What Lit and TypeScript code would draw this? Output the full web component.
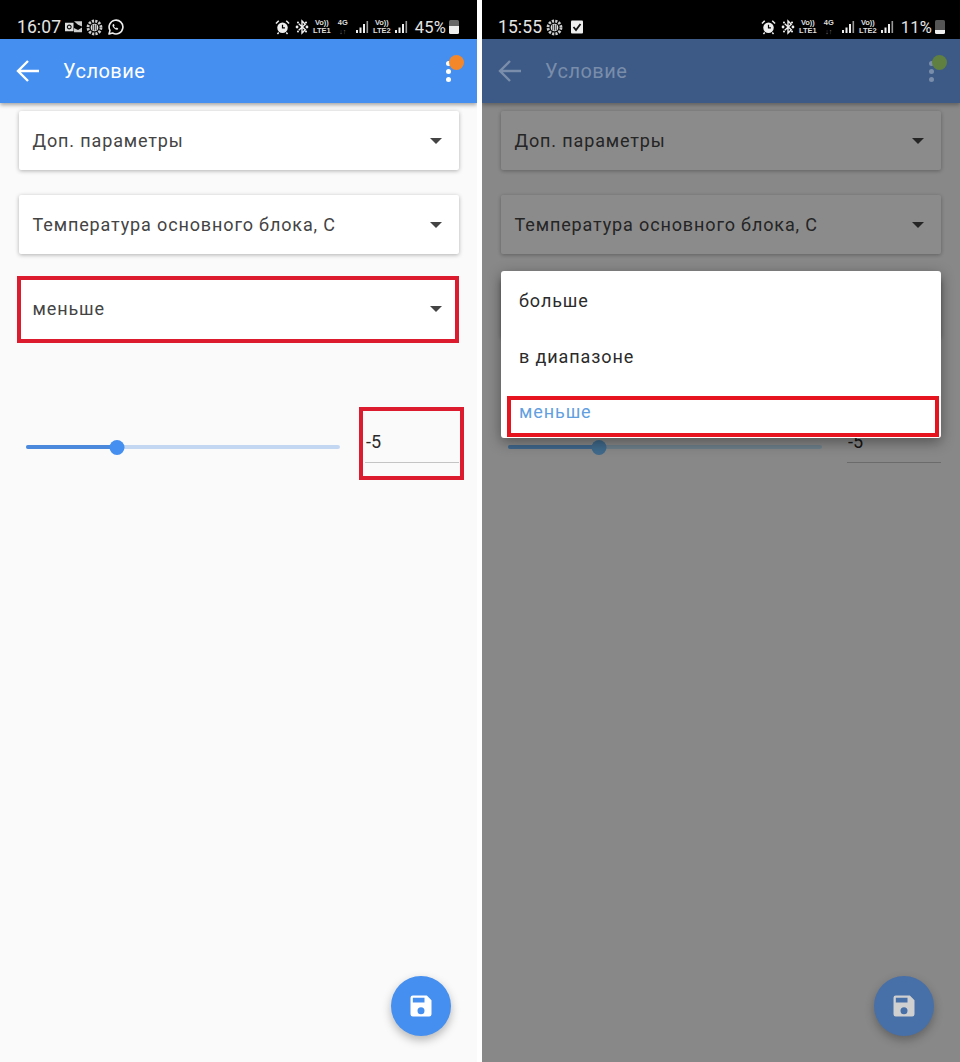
import { LitElement, html, css, svg, nothing } from "lit";
import { customElement, property } from "lit/decorators.js";

const caret = html`<svg class="caret" width="12" height="6" viewBox="0 0 12 6"><path d="M0 0h12L6 6z" fill="currentColor"/></svg>`;

const alarm = html`<svg width="15" height="16" viewBox="0 0 16 16"><circle cx="8" cy="8.800" r="5.600" fill="#eee"/><path d="M8 5.500v3.400h2.600" stroke="#000" stroke-width="1.300" fill="none"/><path d="M1 4.200 4 1.400M15 4.200l-3-2.800M4 13.800l-1.400 1.600M12 13.800l1.400 1.600" stroke="#eee" stroke-width="1.600"/></svg>`;
const bt = html`<svg width="14" height="16" viewBox="0 0 15 16"><path d="M4 4.500 11 11 7.500 14.500v-13L11 5 4 11.500" stroke="#eee" stroke-width="1.500" fill="none"/><circle cx="2.200" cy="8" r="1.500" fill="#eee"/><circle cx="12.800" cy="8" r="1.500" fill="#eee"/><circle cx="3.200" cy="3.200" r="1.100" fill="#eee"/><circle cx="11.800" cy="3.200" r="1.100" fill="#eee"/><circle cx="3.200" cy="12.800" r="1.100" fill="#eee"/><circle cx="11.800" cy="12.800" r="1.100" fill="#eee"/></svg>`;
const signal = html`<svg width="13" height="14" viewBox="0 0 13 14"><rect x="0" y="10" width="2" height="3" fill="#eee"/><rect x="3.500" y="7.500" width="2" height="5.500" fill="#eee"/><rect x="7" y="4" width="2" height="9" fill="#eee"/><rect x="10.500" y="1" width="1.600" height="12" fill="#999"/></svg>`;
const gear = html`<svg width="17" height="17" viewBox="0 0 17 17"><circle cx="8.500" cy="8.500" r="6.500" fill="none" stroke="#ccc" stroke-width="2.800" stroke-dasharray="2.200 1.200"/><circle cx="8.500" cy="8.500" r="3.800" fill="#ddd"/><path d="M6.700 5.500v6M8.500 5.500v6M10.300 5.500v6" stroke="#222" stroke-width=".8"/></svg>`;
const mail = html`<svg width="17" height="14" viewBox="0 0 18 14"><rect x="0" y="2.500" width="9" height="9" fill="#ddd"/><circle cx="4.500" cy="7" r="2" fill="none" stroke="#111" stroke-width="1.200"/><path d="M9.500 1H18v5.500l-4.200-2z" fill="#ccc"/><path d="M9.500 12.500H18V7.500l-4.200 2.600-4.300-2z" fill="#ccc"/></svg>`;
const whatsapp = html`<svg width="17" height="17" viewBox="0 0 17 17"><path d="M2 15l1-3.600a6.900 6.900 0 1 1 2.600 2.600z" fill="none" stroke="#eee" stroke-width="1.600" stroke-linejoin="round"/><path d="M6 5.200c-.9.8-.6 2.200.6 3.600s2.700 2.300 3.700 1.900c.7-.3 1-.9.900-1.300l-1.500-.8-.7.700c-.7-.2-1.600-1.100-2-2l.6-.7-.7-1.600z" fill="#eee"/></svg>`;
const checkbox = html`<svg width="12" height="14" viewBox="0 0 12 14"><rect width="12" height="13" y=".5" rx="1" fill="#eee"/><path d="M2.500 7l2.500 3 4.500-6" stroke="#111" stroke-width="1.800" fill="none"/></svg>`;
const save = svg`<path d="M17 3H5a2 2 0 0 0-2 2v14a2 2 0 0 0 2 2h14a2 2 0 0 0 2-2V7l-4-4zm-5 16a3 3 0 1 1 0-6 3 3 0 0 1 0 6zm3-10H5V5h10v4z" fill="#fff"/>`;

@customElement("phone-screen")
class PhoneScreen extends LitElement {
  @property() time = "";
  @property() battery = "";
  @property({ type: Boolean }) dim = false;

  static styles = css`
    :host { display: flex; flex-direction: column; position: relative; height: 1062px; background: #fafafa; overflow: hidden; font-family: Roboto, sans-serif; }
    .status { height: 39px; flex: none; background: #000; color: #e4e4e4; display: flex; align-items: flex-end; justify-content: space-between; padding: 0 18px 1px 17px; box-sizing: border-box; position: relative; z-index: 3; }
    .dim .status { padding-right: 15px; padding-left: 16px; }
    .group { display: flex; align-items: center; gap: 4px; height: 22px; }
    .time { font-size: 17.500px; letter-spacing: .1px; }
    .right { gap: 5px; }
    .net { width: 16px; display: flex; flex-direction: column; align-items: center; font: 700 7.500px/8.500px "Liberation Sans", sans-serif; color: #ddd; letter-spacing: -.1px; }
    .net small { font-size: 7px; color: #777; line-height: 7px; }
    .pct { font-size: 16.500px; letter-spacing: .2px; margin-left: 2px; }
    .batt { width: 10px; height: 14px; border-radius: 1.500px; background: linear-gradient(#666 0 42%, #eee 42%); flex: none; margin-left: -2px; }
    .dim .batt { background: linear-gradient(#555 0 72%, #eee 72%); }
    .bar { height: 64px; flex: none; background: #448ff0; box-shadow: 0 2px 4px rgba(0,0,0,.35); color: #fff; display: flex; align-items: center; position: relative; z-index: 2; padding: 0 18px 0 16px; }
    .title { font-size: 20px; margin-left: 23px; letter-spacing: .5px; flex: 1; }
    .dots { display: flex; flex-direction: column; gap: 3px; margin-right: 8px; }
    .dots i { width: 5px; height: 5px; border-radius: 50%; background: currentColor; }
    .badge { position: absolute; right: 13px; top: 16px; width: 15px; height: 15px; border-radius: 50%; background: #f5872b; }
    .dim .bar { background: #3c5a85; color: #7a8dab; box-shadow: 0 2px 4px rgba(0,0,0,.3); }
    .dim .badge { background: #5f8040; }
    .body { flex: 1; padding: 8px 0 0 19px; display: flex; flex-direction: column; gap: 25px; }
    .select { width: 440px; box-sizing: border-box; height: 59px; flex: none; background: #fff; border-radius: 2px; box-shadow: 0 1px 4px rgba(0,0,0,.3); display: flex; align-items: center; justify-content: space-between; padding: 0 17px 0 13.500px; font-size: 18px; letter-spacing: .87px; color: #444; position: relative; }
    .select.marked { box-shadow: 0 5px 0 #fff; }
    .caret { color: #444; }
    .mark { position: absolute; border: 4px solid #dc1c2e; box-sizing: border-box; pointer-events: none; }
    .mark-select { inset: -3px 0 -5px -2px; }
    .mark-input { inset: -17px -5px -18px -6px; }
    .slider-row { display: flex; align-items: center; width: 440px; box-sizing: border-box; height: 39px; margin-top: 61px; padding-left: 7px; gap: 25px; }
    .slider { position: relative; width: 314px; flex: none; height: 4px; margin-top: 7px; background: #c3d7f2; border-radius: 2px; }
    .slider .fill { height: 100%; border-radius: 2px; background: #4a89dc; }
    .slider .thumb { position: absolute; top: -5.500px; width: 15px; height: 15px; border-radius: 50%; background: #448ff0; transform: translateX(-50%); }
    .dim .slider { background: #c8e9ff; }
    .dim .slider .fill { background: #74bbff; }
    .dim .slider .thumb { background: #74c0ff; }
    .field { position: relative; flex: 1; height: 39px; border-bottom: 1px solid #c4c4c4; box-sizing: border-box; padding-left: 1px; font-size: 18px; line-height: 36px; color: #2a2a2a; }
    .fab { position: absolute; right: 26px; bottom: 26px; width: 60px; height: 60px; border-radius: 50%; background: #448ff0; box-shadow: 0 4px 10px rgba(0,0,0,.28); display: flex; align-items: center; justify-content: center; z-index: 2; }
    .dim .fab { background: #476fa8; }
    .dim .fab path { fill: #d0d0d0; }
    .scrim { position: absolute; inset: 39px 0 0; background: rgba(0,0,0,.455); z-index: 1; }
    .menu { position: absolute; left: 19px; top: 271px; width: 440px; height: 167px; background: #fff; border-radius: 3px; box-shadow: 0 4px 14px rgba(0,0,0,.4); z-index: 3; padding-left: 18px; box-sizing: border-box; font-size: 18px; letter-spacing: .9px; color: #2b2b2b; }
    .item { height: 56px; line-height: 60px; }
    .item.on { color: #629fdf; position: relative; margin-left: -18px; padding-left: 18px; margin-top: -1px; }
    .item.on .mark { inset: 14px 2px 1px 6px; border-color: #e5141f; }
  `;

  render() {
    const d = this.dim;
    return html`<div class=${d ? "dim" : ""} style="display:contents">
      <div class="status">
        <div class="group">
          <span class="time">${this.time}</span>
          ${d ? html`${gear}<span style="width:0"></span>${checkbox}` : html`${mail}${gear}${whatsapp}`}
        </div>
        <div class="group right">
          ${alarm}${bt}
          <span class="net">Vo))<span>LTE1</span></span>
          <span class="net">4G<small>↓↑</small></span>
          ${signal}
          <span class="net">Vo))<span>LTE2</span></span>
          ${signal}
          <span class="pct">${this.battery}</span>
          <span class="batt"></span>
        </div>
      </div>
      <div class="bar">
        <svg width="24" height="24" viewBox="0 0 24 24"><path d="M23 12H2M12 2 2 12l10 10" stroke="currentColor" stroke-width="2.400" fill="none"/></svg>
        <span class="title">Условие</span>
        <span class="dots"><i></i><i></i><i></i></span>
        <span class="badge"></span>
      </div>
      <div class="body">
        <div class="select">Доп. параметры ${caret}</div>
        <div class="select">Температура основного блока, С ${caret}</div>
        <div class="select ${d ? "" : "marked"}">меньше ${caret}${d ? nothing : html`<span class="mark mark-select"></span>`}</div>
        <div class="slider-row">
          <div class="slider">
            <div class="fill" style="width:${(91 / 314) * 100}%"></div>
            <div class="thumb" style="left:${(91 / 314) * 100}%"></div>
          </div>
          <div class="field">-5${d ? nothing : html`<span class="mark mark-input"></span>`}</div>
        </div>
      </div>
      ${d ? html`<div class="scrim"></div>
        <div class="menu">
          <div class="item">больше</div>
          <div class="item">в диапазоне</div>
          <div class="item on">меньше<span class="mark"></span></div>
        </div>` : nothing}
      <div class="fab"><svg width="28" height="28" viewBox="0 0 24 24">${save}</svg></div>
    </div>`;
  }
}

@customElement("app-root")
class AppRoot extends LitElement {
  static styles = css`
    :host { display: grid; grid-template-columns: 477px 478px; gap: 5px; width: 960px; height: 1062px; background: #fff; overflow: hidden; }
  `;
  render() {
    return html`
      <phone-screen time="16:07" battery="45%"></phone-screen>
      <phone-screen time="15:55" battery="11%" dim></phone-screen>
    `;
  }
}
